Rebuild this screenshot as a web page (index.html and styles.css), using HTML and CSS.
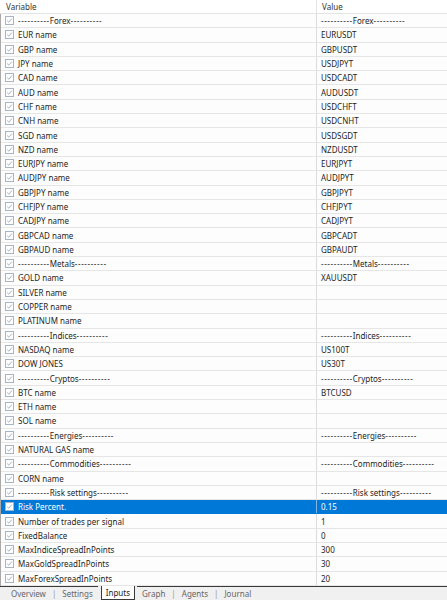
FILE: index.html
```html
<!DOCTYPE html>
<html>
<head>
<meta charset="utf-8">
<link rel="stylesheet" href="styles.css">
</head>
<body>
<div class="panel">
  <div class="header">
    <div class="hcell var">Variable</div>
    <div class="hcell val">Value</div>
  </div>
  <div class="rows" id="rows"></div>
  <div class="tabs">
    <span class="tab">Overview</span><span class="sep">|</span>
    <span class="tab">Settings</span>
    <span class="tab active">Inputs</span>
    <span class="tab">Graph</span><span class="sep">|</span>
    <span class="tab">Agents</span><span class="sep">|</span>
    <span class="tab">Journal</span>
    <span class="fill"></span>
  </div>
</div>
<script src="app.js"></script>
</body>
</html>
```
FILE: styles.css
```css
html, body { margin: 0; padding: 0; background: #fff; }
body { width: 447px; height: 600px; overflow: hidden; font-family: "Noto Sans", "Open Sans", sans-serif; font-size: 8px; color: #1e1e1e; }
.panel { display: flex; flex-direction: column; height: 600px; }
.header { display: grid; grid-template-columns: 317px 1fr; height: 14px; border-bottom: 1px solid #e4e4e4; box-sizing: border-box; background: #fff; }
.hcell { display: flex; align-items: center; color: #333; }
.hcell.var { padding-left: 6px; border-right: 1px solid #e4e4e4; }
.hcell.val { padding-left: 5px; }
.rows { display: flex; flex-direction: column; border-left: 1px solid #a9a9a9; height: 572px; }
.row { display: grid; grid-template-columns: 316px 1fr; height: 14.3px; box-sizing: border-box; border-bottom: 1px solid #e6e6e6; background: #fdfdfd; }
.cell { display: flex; align-items: center; white-space: nowrap; overflow: hidden; }
.cell.name { padding-left: 4px; gap: 4px; border-right: 1px solid #dcdcdc; }
.cell.value { padding-left: 4px; }
.dash { letter-spacing: 0.6px; }
.cb { width: 9px; height: 9px; flex: none; display: block; }
.row.sel { background: #0078d7; color: #fff; border-bottom-color: #0078d7; }
.row.sel .cell.name { border-right-color: #7fb6e6; }
.tabs { display: flex; align-items: stretch; height: 14px; background: #f0f0f0; color: #666; }
.tab { display: flex; align-items: center; padding: 0 5px; border-top: 1px solid #3a3a3a; }
.tab:first-child { padding-left: 11px; }
.sep { display: flex; align-items: center; color: #999; border-top: 1px solid #3a3a3a; padding: 0 1px; }
.tab.active { background: #fff; color: #222; border: 1px solid #3a3a3a; border-top: none; margin: 0 2px 0 3px; padding: 0 4px; }
.fill { flex: 1; border-top: 1px solid #3a3a3a; }
```
FILE: app.js
```js
var data = [
 ["----------Forex----------","----------Forex----------"],
 ["EUR name","EURUSDT"],["GBP name","GBPUSDT"],["JPY name","USDJPYT"],["CAD name","USDCADT"],
 ["AUD name","AUDUSDT"],["CHF name","USDCHFT"],["CNH name","USDCNHT"],["SGD name","USDSGDT"],
 ["NZD name","NZDUSDT"],["EURJPY name","EURJPYT"],["AUDJPY name","AUDJPYT"],["GBPJPY name","GBPJPYT"],
 ["CHFJPY name","CHFJPYT"],["CADJPY name","CADJPYT"],["GBPCAD name","GBPCADT"],["GBPAUD name","GBPAUDT"],
 ["----------Metals----------","----------Metals----------"],
 ["GOLD name","XAUUSDT"],["SILVER name",""],["COPPER name",""],["PLATINUM name",""],
 ["----------Indices----------","----------Indices----------"],
 ["NASDAQ name","US100T"],["DOW JONES","US30T"],
 ["----------Cryptos----------","----------Cryptos----------"],
 ["BTC name","BTCUSD"],["ETH name",""],["SOL name",""],
 ["----------Energies----------","----------Energies----------"],
 ["NATURAL GAS name",""],
 ["----------Commodities----------","----------Commodities----------"],
 ["CORN name",""],
 ["----------Risk settings----------","----------Risk settings----------"],
 ["Risk Percent.","0.15"],["Number of trades per signal","1"],["FixedBalance","0"],
 ["MaxIndiceSpreadInPoints","300"],["MaxGoldSpreadInPoints","30"],["MaxForexSpreadInPoints","20"]
];
var cb = '<svg class="cb" viewBox="0 0 9 9"><rect x="0.5" y="0.5" width="8" height="8" fill="#fff" stroke="#a6b4c4"/><path d="M2.2 4.6 L3.8 6.2 L6.9 2.6" fill="none" stroke="#9fb3c8" stroke-width="1"/></svg>';
function fill(el, text) {
  var m = /^(-+)(.+?)(-+)$/.exec(text);
  if (!m) { el.appendChild(document.createTextNode(text)); return; }
  var a = document.createElement('span'); a.className = 'dash'; a.textContent = m[1];
  var b = document.createElement('span'); b.className = 'dash'; b.textContent = m[3];
  el.appendChild(a); el.appendChild(document.createTextNode(m[2])); el.appendChild(b);
}
var rows = document.getElementById('rows');
data.forEach(function (d) {
  var r = document.createElement('div');
  r.className = 'row' + (d[0] === 'Risk Percent.' ? ' sel' : '');
  var n = document.createElement('div'); n.className = 'cell name';
  n.innerHTML = cb;
  var s = document.createElement('span'); fill(s, d[0]); n.appendChild(s);
  var v = document.createElement('div'); v.className = 'cell value';
  var vs = document.createElement('span'); fill(vs, d[1]); v.appendChild(vs);
  r.appendChild(n); r.appendChild(v); rows.appendChild(r);
});
```
